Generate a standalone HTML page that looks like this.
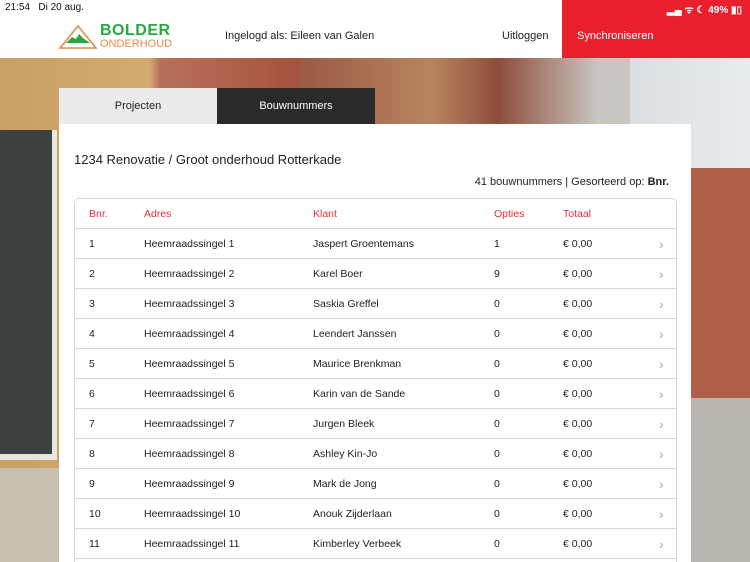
<!DOCTYPE html>
<html><head><meta charset="utf-8"><style>
*{margin:0;padding:0;box-sizing:border-box}
html,body{width:750px;height:562px;overflow:hidden}
body{position:relative;font-family:"Liberation Sans",sans-serif;background:#fff}
.bg{position:absolute;left:0;top:58px;width:750px;height:504px;overflow:hidden;
background:linear-gradient(90deg,#c9a064 0,#d2ab70 150px,#b9705a 160px,#a5523e 300px,#8c4a3a 440px,#b2745e 520px,#c28c70 600px,#d9dde0 620px,#e8ecef 750px)}
.bg .win{position:absolute;left:0;top:72px;width:57px;height:330px;background:#3c4240;border-right:5px solid #e8e6df;border-bottom:6px solid #e8e6df}
.bg .street{position:absolute;left:0;top:410px;width:60px;height:100px;background:#c7bfb0}
.bg .bld{position:absolute;left:690px;top:110px;width:60px;height:290px;background:#b06048}
.bg .pave{position:absolute;left:690px;top:340px;width:60px;height:170px;background:#b9b6b0}
.bg .bld2{position:absolute;left:300px;top:0;width:330px;height:70px;background:linear-gradient(90deg,#9a5a45,#b88460 40%,#8e4c3a 60%,#c9c5c0 90%)}
.status{position:absolute;top:2px;left:5px;font-size:10px;color:#111}
.hdr{position:absolute;top:0;left:0;width:750px;height:58px;background:#fff}
.sync{position:absolute;left:562px;top:0;width:188px;height:58px;background:#ea1f2d;color:#fff;font-size:11px;padding:30px 0 0 15px}
.st2{position:absolute;right:8px;top:2px;font-size:10px;color:#fff;font-weight:bold}
.ing{position:absolute;left:225px;top:30px;font-size:11px;color:#222}
.uit{position:absolute;left:502px;top:30px;font-size:11px;color:#222}
.tab1{position:absolute;left:59px;top:88px;width:158px;height:36px;background:#ebebeb;font-size:11px;color:#222;text-align:center;line-height:36px}
.tab2{position:absolute;left:217px;top:88px;width:158px;height:36px;background:#2b2a2a;font-size:11px;color:#fff;text-align:center;line-height:36px}
.card{position:absolute;left:59px;top:124px;width:632px;height:438px;background:#fff}
.title{position:absolute;left:74px;top:152px;font-size:13px;color:#222}
.meta{position:absolute;right:81px;top:176px;font-size:11px;color:#222}
.tbl{position:absolute;left:74px;top:198px;width:603px;height:380px;border:1px solid #d6d6d6;border-radius:5px}
.row{position:absolute;left:0;width:601px;height:30px;border-bottom:1px solid #d6d6d6;font-size:10.5px;color:#222}
.row span{position:absolute;top:9px}
.h span{color:#e0303a}
.c1{left:14px}.c2{left:69px}.c3{left:238px}.c4{left:419px}.c5{left:488px}
.chev{left:584px;top:7px!important;color:#aaa;font-size:14px;font-weight:lighter}
</style></head><body>
<div class="bg"><div class="bld2"></div><div class="win"></div><div class="street"></div><div class="bld"></div><div class="pave"></div></div>
<div class="hdr"></div>
<div class="status">21:54&nbsp;&nbsp; Di 20 aug.</div>
<svg style="position:absolute;left:58px;top:24px" width="40" height="26" viewBox="0 0 40 26"><path d="M2 24 L20 2 L38 24 Z" fill="none" stroke="#ea8a4a" stroke-width="1.6"/><path d="M8 19 L14 13 L18 15 L21 10 L25 14 L32 19 Z" fill="#2aa745"/></svg>
<div style="position:absolute;left:100px;top:22px;font-size:16px;font-weight:bold;color:#2aa745;letter-spacing:.5px">BOLDER</div>
<div style="position:absolute;left:100px;top:38px;font-size:11px;color:#ea8a4a">ONDERHOUD</div>
<div class="ing">Ingelogd als: Eileen van Galen</div>
<div class="uit">Uitloggen</div>
<div class="sync">Synchroniseren</div>
<div class="st2">▂▄ ᯤ ☾ 49% ▮▯</div>
<div class="tab1">Projecten</div>
<div class="tab2">Bouwnummers</div>
<div class="card"></div>
<div class="title">1234 Renovatie / Groot onderhoud Rotterkade</div>
<div class="meta">41 bouwnummers | Gesorteerd op: <b>Bnr.</b></div>
<div class="tbl">
<div class="row h" style="top:0"><span class="c1">Bnr.</span><span class="c2">Adres</span><span class="c3">Klant</span><span class="c4">Opties</span><span class="c5">Totaal</span></div>
<div class="row" style="top:30px"><span class="c1">1</span><span class="c2">Heemraadssingel 1</span><span class="c3">Jaspert Groentemans</span><span class="c4">1</span><span class="c5">€ 0,00</span><span class="chev">›</span></div>
<div class="row" style="top:60px"><span class="c1">2</span><span class="c2">Heemraadssingel 2</span><span class="c3">Karel Boer</span><span class="c4">9</span><span class="c5">€ 0,00</span><span class="chev">›</span></div>
<div class="row" style="top:90px"><span class="c1">3</span><span class="c2">Heemraadssingel 3</span><span class="c3">Saskia Greffel</span><span class="c4">0</span><span class="c5">€ 0,00</span><span class="chev">›</span></div>
<div class="row" style="top:120px"><span class="c1">4</span><span class="c2">Heemraadssingel 4</span><span class="c3">Leendert Janssen</span><span class="c4">0</span><span class="c5">€ 0,00</span><span class="chev">›</span></div>
<div class="row" style="top:150px"><span class="c1">5</span><span class="c2">Heemraadssingel 5</span><span class="c3">Maurice Brenkman</span><span class="c4">0</span><span class="c5">€ 0,00</span><span class="chev">›</span></div>
<div class="row" style="top:180px"><span class="c1">6</span><span class="c2">Heemraadssingel 6</span><span class="c3">Karin van de Sande</span><span class="c4">0</span><span class="c5">€ 0,00</span><span class="chev">›</span></div>
<div class="row" style="top:210px"><span class="c1">7</span><span class="c2">Heemraadssingel 7</span><span class="c3">Jurgen Bleek</span><span class="c4">0</span><span class="c5">€ 0,00</span><span class="chev">›</span></div>
<div class="row" style="top:240px"><span class="c1">8</span><span class="c2">Heemraadssingel 8</span><span class="c3">Ashley Kin-Jo</span><span class="c4">0</span><span class="c5">€ 0,00</span><span class="chev">›</span></div>
<div class="row" style="top:270px"><span class="c1">9</span><span class="c2">Heemraadssingel 9</span><span class="c3">Mark de Jong</span><span class="c4">0</span><span class="c5">€ 0,00</span><span class="chev">›</span></div>
<div class="row" style="top:300px"><span class="c1">10</span><span class="c2">Heemraadssingel 10</span><span class="c3">Anouk Zijderlaan</span><span class="c4">0</span><span class="c5">€ 0,00</span><span class="chev">›</span></div>
<div class="row" style="top:330px"><span class="c1">11</span><span class="c2">Heemraadssingel 11</span><span class="c3">Kimberley Verbeek</span><span class="c4">0</span><span class="c5">€ 0,00</span><span class="chev">›</span></div>
</div>
</body></html>
